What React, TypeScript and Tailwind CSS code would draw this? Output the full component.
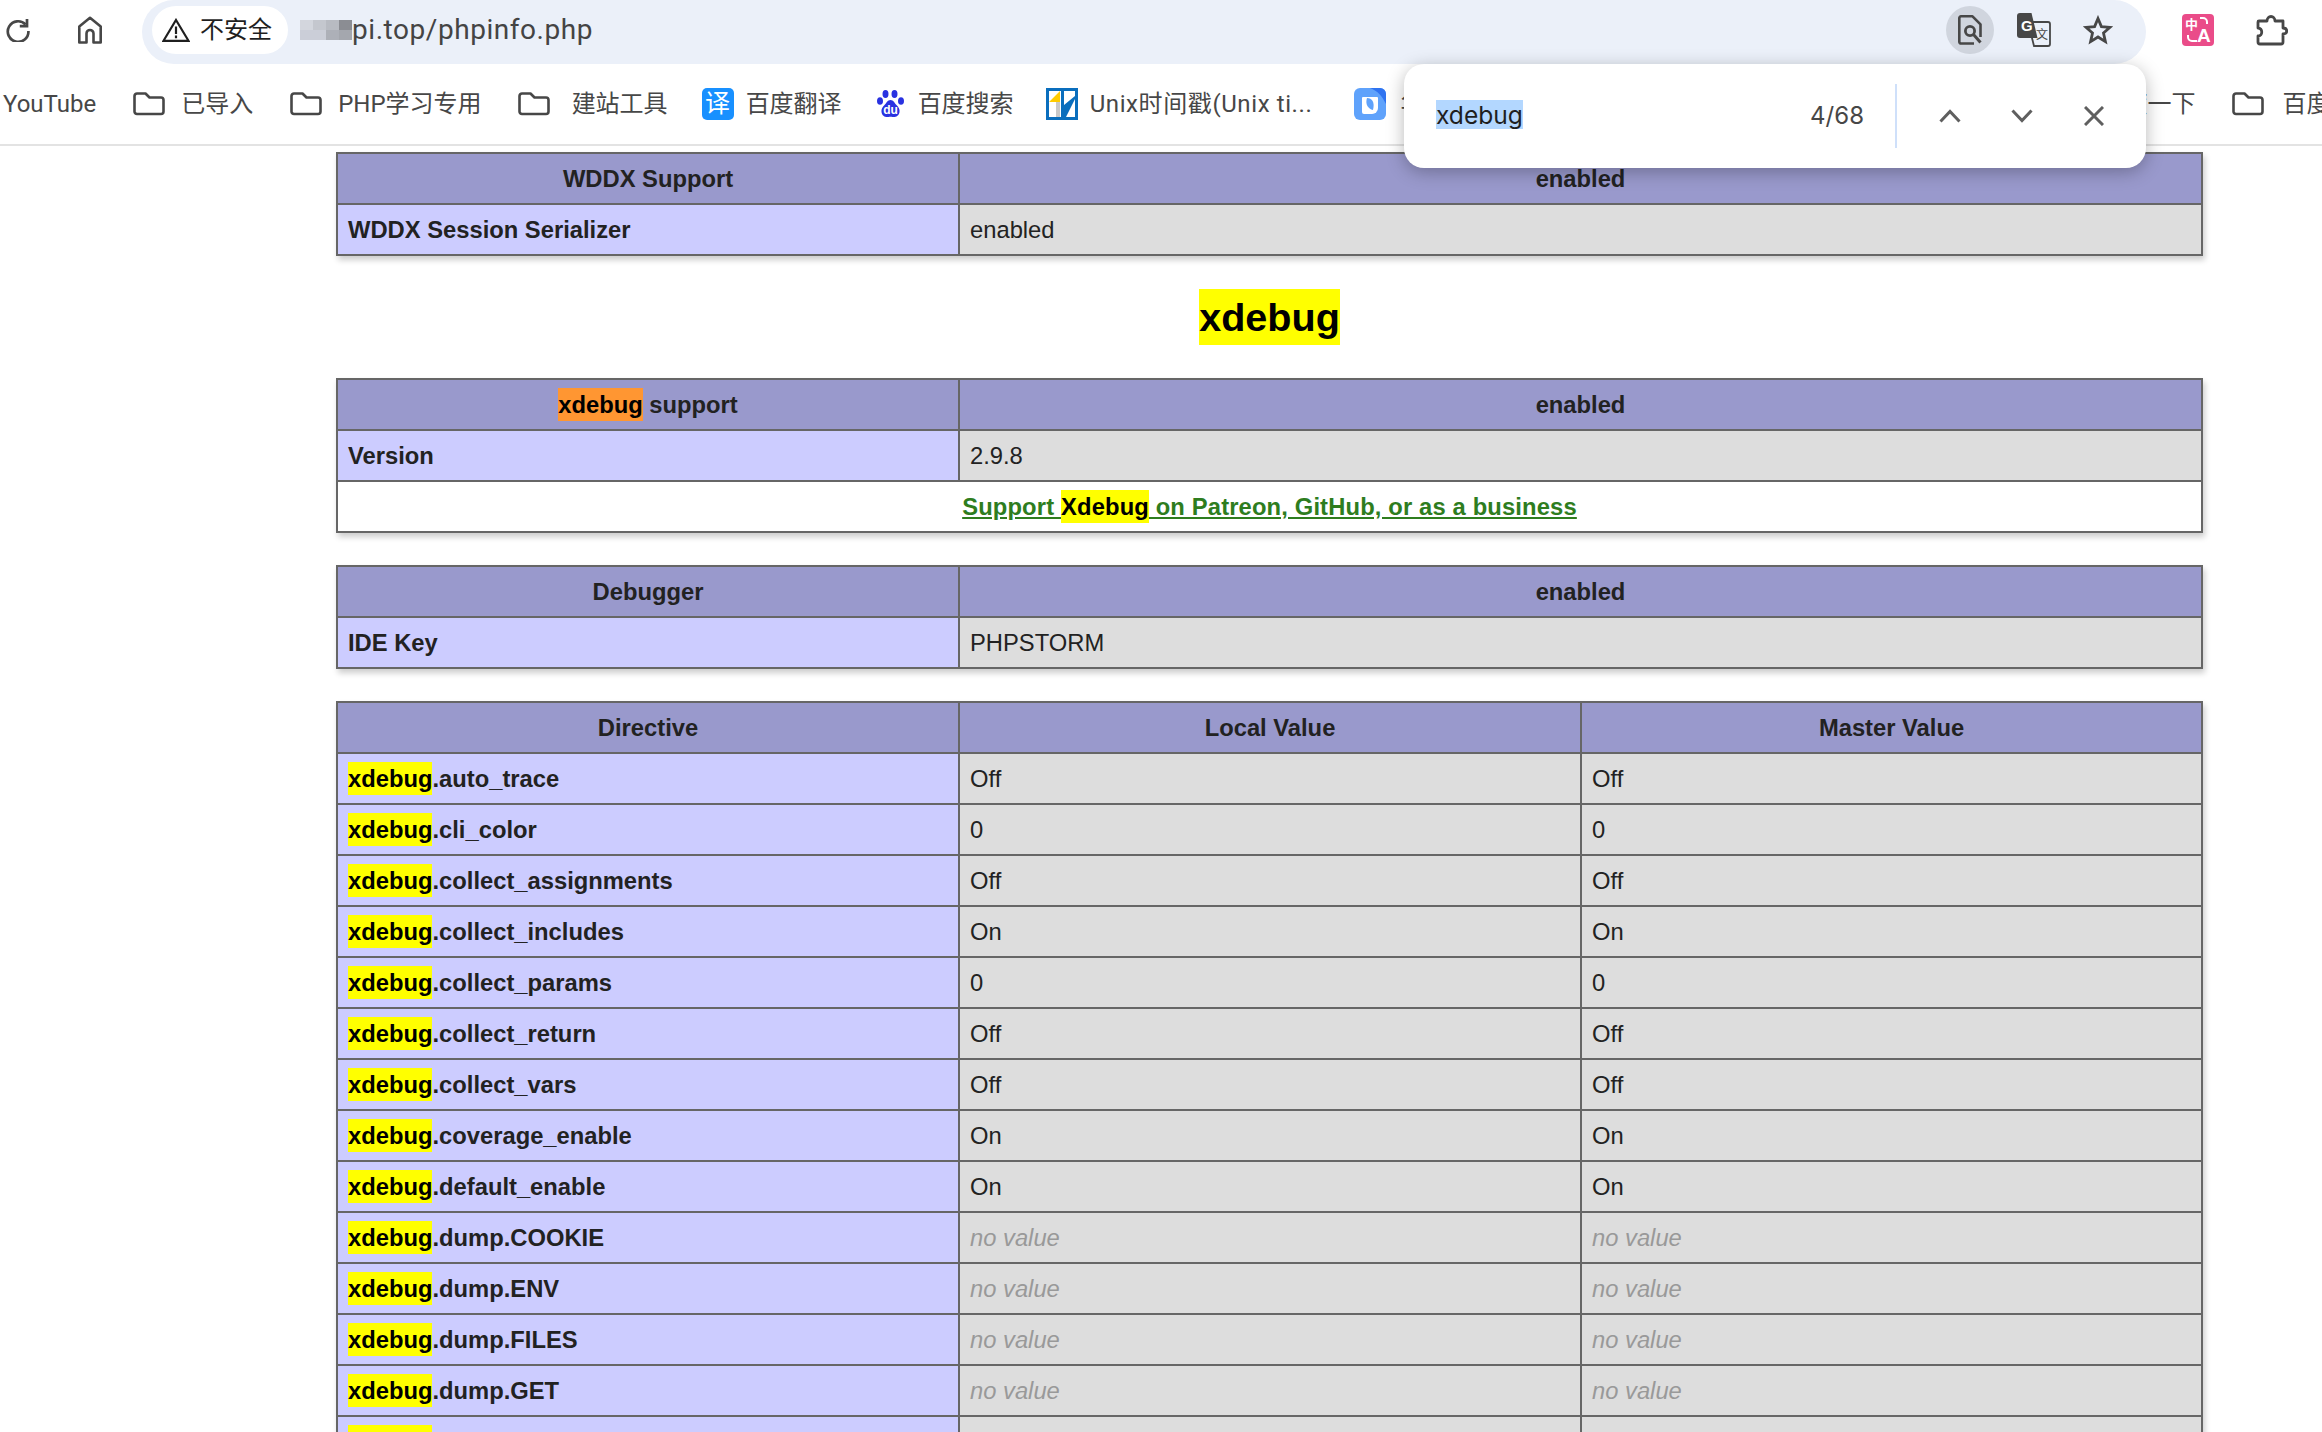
import React from "react";

const Hit = ({ children, active = false }: { children: React.ReactNode; active?: boolean }) => (
  <span className={`inline-block h-[33px] font-bold leading-[33px] text-black ${active ? "bg-[#ff9632]" : "bg-[#ffff00]"}`}>{children}</span>
);

const Folder = ({ className = "" }: { className?: string }) => (
  <svg className={`h-[24px] w-[32px] shrink-0 ${className}`} viewBox="0 0 32 24" fill="none" stroke="#474747" strokeWidth="2.6" strokeLinejoin="round">
    <path d="M1.5 4a2.5 2.5 0 0 1 2.5-2.5h8.5l4 4h11.5a2.5 2.5 0 0 1 2.5 2.5v11.5a2.5 2.5 0 0 1-2.5 2.5H4a2.5 2.5 0 0 1-2.5-2.5z" />
  </svg>
);

const Label = ({ children, className = "" }: { children: React.ReactNode; className?: string }) => (
  <span className={`shrink-0 whitespace-nowrap text-[24px] leading-[32px] text-[#474747] ${className}`}>{children}</span>
);

const TH = ({ children, colSpan }: { children: React.ReactNode; colSpan?: number }) => (
  <th colSpan={colSpan} className="h-[51px] border-2 border-[#666666] bg-[#9999cc] p-0 text-center align-middle font-bold text-[#222222]">
    {children}
  </th>
);
const E = ({ children }: { children: React.ReactNode }) => (
  <td className="h-[51px] border-2 border-[#666666] bg-[#ccccff] px-[10px] py-0 align-middle font-bold text-[#222222]">{children}</td>
);
const V = ({ children }: { children: React.ReactNode }) => (
  <td className="h-[51px] border-2 border-[#666666] bg-[#dddddd] px-[10px] py-0 align-middle text-[#222222]">{children}</td>
);
const NoV = () => <i className="text-[#999999]">no value</i>;

const tableCls =
  "ml-[336px] w-[1867px] table-fixed border-collapse shadow-[2px_4px_6px_rgba(0,0,0,0.2)]";

const Cols2 = () => (
  <colgroup>
    <col className="w-[622px]" />
    <col />
  </colgroup>
);

const rows: [string, string | null][] = [
  ["auto_trace", "Off"],
  ["cli_color", "0"],
  ["collect_assignments", "Off"],
  ["collect_includes", "On"],
  ["collect_params", "0"],
  ["collect_return", "Off"],
  ["collect_vars", "Off"],
  ["coverage_enable", "On"],
  ["default_enable", "On"],
  ["dump.COOKIE", null],
  ["dump.ENV", null],
  ["dump.FILES", null],
  ["dump.GET", null],
  ["dump.POST", null],
];

const mosaic = ["#d3d6dd", "#c4c7ce", "#b8bbc2", "#8b8d93", "#cbced8", "#cbced8", "#adb0b8", "#a4a7ae"];

export default function App() {
  return (
    <div className="relative h-[1432px] w-[2322px] overflow-hidden bg-white font-['Liberation_Sans','Noto_Sans_CJK_SC',sans-serif] text-[23.76px]">
      <header className="h-[146px] border-b-2 border-[#e3e3e3] font-['Roboto','Noto_Sans_CJK_SC',sans-serif]">
        <div className="flex h-[64px] items-center pb-[4px]">
          <svg className="ml-[6px] h-[24px] w-[24px] shrink-0" viewBox="0 0 24 24" fill="none" stroke="#474747" strokeWidth="2.7">
            <path d="M19.6 6.5A10.3 10.3 0 1 0 22.4 13" />
            <path d="M21 1v7.2h-7.2" strokeLinejoin="miter" />
          </svg>
          <svg className="ml-[48px] h-[28px] w-[24px] shrink-0" viewBox="0 0 24 28" fill="none" stroke="#474747" strokeWidth="2.6" strokeLinejoin="round">
            <path d="M12 1.8 22.7 10.5V26.5H15.5V17.5a3.5 3.500 0 0 0-7 0V26.500H1.300V10.500z" />
          </svg>
          <div className="-mb-[4px] ml-[40px] flex h-[64px] w-[2004px] shrink-0 items-center rounded-full bg-[#ebf0f9] pb-[4px] pl-[10px]">
            <div className="flex h-[48px] w-[136px] shrink-0 items-center rounded-full bg-white pl-[10px]">
              <svg className="h-[24px] w-[28px] shrink-0" viewBox="0 0 28 24" fill="none" stroke="#1f1f1f" strokeWidth="2.2" strokeLinejoin="miter">
                <path d="M14 2 26.5 22.8H1.5z" />
                <path d="M14 8.5v7.5M14 17.5v2.8" />
              </svg>
              <span className="ml-[10px] whitespace-nowrap text-[24px] leading-[32px] text-[#1f1f1f]">不安全</span>
            </div>
            <div className="ml-[12px] grid h-[20px] w-[52px] shrink-0 grid-cols-4 grid-rows-2">
              {mosaic.map((c, i) => (
                <div key={i} style={{ backgroundColor: c }} />
              ))}
            </div>
            <span className="whitespace-nowrap text-[28px] leading-[36px] tracking-[0.55px] text-[#444444]">pi.top/phpinfo.php</span>
            <div className="ml-auto flex h-[48px] w-[48px] shrink-0 items-center justify-center rounded-full bg-[#d0d5de]">
              <svg className="h-[30px] w-[24px]" viewBox="0 0 24 30" fill="none" stroke="#474747" strokeWidth="2.6" strokeLinejoin="round">
                <path d="M16 28.5H3a1.7 1.7 0 0 1-1.7-1.7V3A1.7 1.7 0 0 1 3 1.3h11.5l8 8V22" />
                <circle cx="12" cy="16" r="4.6" strokeWidth="2.8" />
                <path d="m15.5 19.5 7 8" strokeWidth="3" />
              </svg>
            </div>
            <svg className="ml-[23px] h-[34px] w-[34px] shrink-0" viewBox="0 0 34 34">
              <path d="M12 9h19a2 2 0 0 1 2 2v20a2 2 0 0 1-2 2H17l-2-8z" fill="#ebf0f9" stroke="#474747" strokeWidth="1.8" />
              <path d="M3 0h11.5l6 25H3a3 3 0 0 1-3-3V3a3 3 0 0 1 3-3z" fill="#474747" />
              <text x="4" y="18" fontSize="15" fontWeight="700" fill="#ffffff" fontFamily="Liberation Sans">G</text>
              <text x="19" y="26" fontSize="12" fill="#474747" fontFamily="Noto Sans CJK SC">文</text>
            </svg>
            <svg className="ml-[32px] h-[30px] w-[30px] shrink-0" viewBox="0 0 30 30" fill="none" stroke="#474747" strokeWidth="2.8" strokeLinejoin="miter">
              <path d="M15 3.5 18.4 11.6 27 12.3 20.5 18 22.4 26.6 15 22 7.6 26.6 9.5 18 3 12.3 11.6 11.6z" />
            </svg>
            <div className="w-[33px] shrink-0" />
          </div>
          <svg className="ml-[36px] h-[32px] w-[32px] shrink-0" viewBox="0 0 32 32">
            <rect width="32" height="32" rx="4" fill="#ea4c89" />
            <text x="3" y="15" fontSize="13" fontWeight="700" fill="#ffffff" fontFamily="Noto Sans CJK SC">中</text>
            <text x="15" y="28" fontSize="19" fontWeight="700" fill="#ffffff" fontFamily="Liberation Sans">A</text>
            <path d="M18 4h3a4 4 0 0 1 4 4v2M15 27h-5a4 4 0 0 1-4-4v-2" fill="none" stroke="#ffffff" strokeWidth="2" />
          </svg>
          <svg className="ml-[42px] h-[32px] w-[32px] shrink-0" viewBox="0 0 32 32" fill="none" stroke="#474747" strokeWidth="2.8" strokeLinejoin="round">
            <path d="M3 7h8c0-6 8-6 8 0h8v7c5 0 5 6 0 6v8a2 2 0 0 1-2 2H4a2 2 0 0 1-2-2v-6c5 0 5-8 0-8V8a1 1 0 0 1 1-1z" />
          </svg>
        </div>

        <nav className="flex h-[80px] items-center overflow-hidden">
          <Label className="ml-[3px]">YouTube</Label>
          <Folder className="ml-[37px]" />
          <Label className="ml-[16px]">已导入</Label>
          <Folder className="ml-[37px]" />
          <Label className="ml-[16px]">PHP学习专用</Label>
          <Folder className="ml-[36px]" />
          <Label className="ml-[22px]">建站工具</Label>
          <div className="ml-[34px] flex h-[32px] w-[32px] shrink-0 items-center justify-center rounded-[5px] bg-[#1890ff] text-[25px] leading-[32px] text-white">译</div>
          <Label className="ml-[12px]">百度翻译</Label>
          <svg className="ml-[35px] h-[28px] w-[27px] shrink-0" viewBox="0 0 27 28" fill="#2932e1">
            <ellipse cx="8.5" cy="4" rx="3" ry="4" />
            <ellipse cx="17.5" cy="4" rx="3" ry="4" />
            <ellipse cx="3" cy="11" rx="3" ry="3.8" />
            <ellipse cx="24" cy="11" rx="3" ry="3.8" />
            <path d="M13.5 10c3 0 4 3 6 5s3.500 4 3 7c-.5 4-4 5.500-7 5-1.500-.3-2.500-.4-4 0-3 .6-6.500-1-7-5-.4-3 1-5 3-7s3-5 6-5z" />
            <text x="13.500" y="24" fontSize="12" fontWeight="700" fill="#ffffff" textAnchor="middle" fontFamily="Liberation Sans">du</text>
          </svg>
          <Label className="ml-[14px]">百度搜索</Label>
          <svg className="ml-[32px] h-[32px] w-[32px] shrink-0" viewBox="0 0 32 32">
            <rect x="1.500" y="1.500" width="29" height="29" fill="#ffffff" stroke="#0a6ebd" strokeWidth="3" />
            <path d="M3 14 14 3v26h-4V14z" fill="#ffcc00" />
            <path d="M10 14h4v15h-4z" fill="#c9c9c9" />
            <path d="M15 3h3v14l11-9v3L20 29h-5z" fill="#0a6ebd" />
          </svg>
          <Label className="ml-[12px] tracking-[0.6px]">Unix时间戳(Unix ti...</Label>
          <svg className="ml-[42px] h-[32px] w-[32px] shrink-0" viewBox="0 0 32 32">
            <rect width="32" height="32" rx="6" fill="#5fa2fb" />
            <path d="M16 0h10a6 6 0 0 1 6 6v10C28 8 24 3 16 0z" fill="#2f73f0" />
            <path d="M9 9h14a1 1 0 0 1 1 1v10a6 6 0 0 1-6 6h-8a2 2 0 0 1-2-2V10a1 1 0 0 1 1-1z" fill="#ffffff" />
            <path d="M13 10c5 0 8 4 6 12-5-1-8-6-6-12z" fill="#5fa2fb" />
          </svg>
          <Label className="ml-[14px]">华为云</Label>
          <Label className="ml-[627px]">百度一下</Label>
          <Folder className="ml-[37px]" />
          <Label className="ml-[18px]">百度</Label>
        </nav>
      </header>

      <main className="pt-[6px]">
        <table className={tableCls}>
          <Cols2 />
          <tbody>
            <tr>
              <TH>WDDX Support</TH>
              <TH>enabled</TH>
            </tr>
            <tr>
              <E>WDDX Session Serializer</E>
              <V>enabled</V>
            </tr>
          </tbody>
        </table>

        <div className="ml-[336px] flex h-[122px] w-[1867px] items-center justify-center">
          <h2 className="h-[56px] bg-[#ffff00] text-[39.6px] font-bold leading-[56px] text-black">xdebug</h2>
        </div>

        <table className={tableCls}>
          <Cols2 />
          <tbody>
            <tr>
              <TH>
                <Hit active>xdebug</Hit> support
              </TH>
              <TH>enabled</TH>
            </tr>
            <tr>
              <E>Version</E>
              <V>2.9.8</V>
            </tr>
            <tr>
              <td colSpan={2} className="h-[51px] border-2 border-[#666666] bg-white p-0 text-center align-middle">
                <a href="#" className="font-bold tracking-[0.15px] text-[#2e7d1e] underline">
                  Support <Hit>Xdebug</Hit> on Patreon, GitHub, or as a business
                </a>
              </td>
            </tr>
          </tbody>
        </table>

        <div className="h-[32px]" />

        <table className={tableCls}>
          <Cols2 />
          <tbody>
            <tr>
              <TH>Debugger</TH>
              <TH>enabled</TH>
            </tr>
            <tr>
              <E>IDE Key</E>
              <V>PHPSTORM</V>
            </tr>
          </tbody>
        </table>

        <div className="h-[32px]" />

        <table className={tableCls}>
          <colgroup>
            <col className="w-[622px]" />
            <col className="w-[622px]" />
            <col />
          </colgroup>
          <tbody>
            <tr>
              <TH>Directive</TH>
              <TH>Local Value</TH>
              <TH>Master Value</TH>
            </tr>
            {rows.map(([name, val]) => (
              <tr key={name}>
                <E>
                  <Hit>xdebug</Hit>.{name}
                </E>
                <V>{val ?? <NoV />}</V>
                <V>{val ?? <NoV />}</V>
              </tr>
            ))}
          </tbody>
        </table>
      </main>

      <div className="absolute left-[1404px] top-[64px] flex h-[104px] w-[742px] items-center rounded-[20px] bg-white pl-[32px] font-['Inter','Noto_Sans_CJK_SC',sans-serif] shadow-[0_4px_18px_rgba(0,0,0,0.28)]">
        <span className="-mt-[3px] h-[29px] bg-[#b3d7ff] text-[24.6px] leading-[31px] text-[#1f1f1f]">xdebug</span>
        <span className="ml-auto text-[24px] text-[#474747]">4/68</span>
        <div className="ml-[31px] h-[64px] w-[2px] bg-[#cfe0fa]" />
        <svg className="ml-[42px] h-[14px] w-[22px] shrink-0" viewBox="0 0 22 14" fill="none" stroke="#5f5f5f" strokeWidth="3">
          <path d="m1.500 12.500 9.500-10 9.500 10" />
        </svg>
        <svg className="ml-[50px] h-[14px] w-[22px] shrink-0" viewBox="0 0 22 14" fill="none" stroke="#5f5f5f" strokeWidth="3">
          <path d="m1.500 1.500 9.500 10 9.500-10" />
        </svg>
        <svg className="ml-[51px] h-[20px] w-[20px] shrink-0" viewBox="0 0 20 20" fill="none" stroke="#5f5f5f" strokeWidth="3">
          <path d="m1 1 18 18M19 1 1 19" />
        </svg>
        <div className="w-[42px] shrink-0" />
      </div>
    </div>
  );
}
